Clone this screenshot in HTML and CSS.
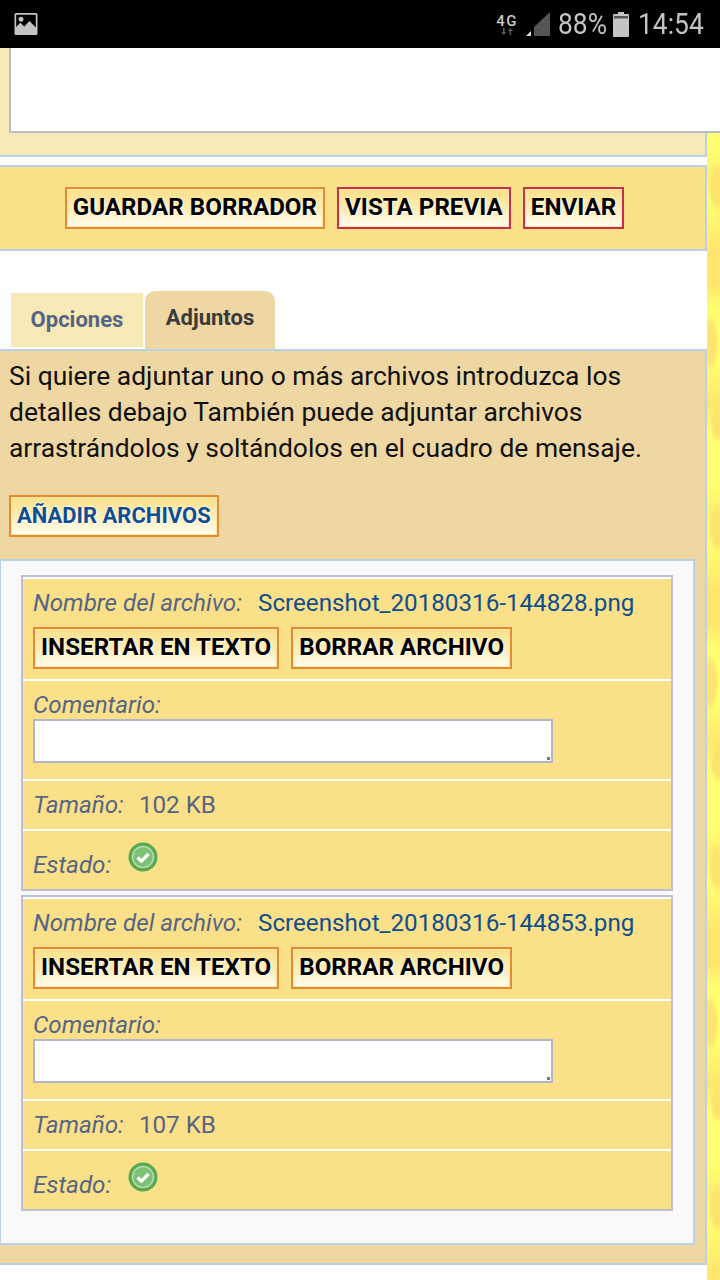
FILE: index.html
```html
<!DOCTYPE html>
<html lang="es">
<head>
<meta charset="utf-8">
<title>Adjuntos</title>
<link rel="stylesheet" href="styles.css">
</head>
<body>
<header class="status">
  <svg class="status-img" width="24" height="24" viewBox="0 0 24 24"><path fill="#c4c4c4" fill-rule="evenodd" d="M2 1h20a1.500 1.500 0 0 1 1.500 1.500v19a1.500 1.500 0 0 1-1.500 1.500H2a1.500 1.500 0 0 1-1.500-1.500v-19A1.500 1.500 0 0 1 2 1zM2.200 2.800v12.200l4-4.200 4.200 3.800 5-5.600 6.400 6.600V2.800zM7 4.700a2.500 2.500 0 1 1 0 5 2.500 2.500 0 0 1 0-5z"/></svg>
  <div class="status-right">
    <div class="net">
      <span class="net-label">4G</span>
      <svg width="14" height="7" viewBox="0 0 14 7"><path fill="#555" d="M3 0h1.600v4H6.500L3.800 7 1 4h2zM9.500 7h1.600V3H13L10.300 0 7.600 3h1.900z"/></svg>
    </div>
    <svg class="signal" width="26" height="26" viewBox="0 0 26 26"><path fill="#555" d="M25 1v24H9V16z"/><path fill="#ddd" d="M6 20v5H1z"/></svg>
    <span class="pct">88%</span>
    <svg class="batt" width="16" height="25" viewBox="0 0 16 25"><path fill="#c4c4c4" d="M5 0h6v2h4a1 1 0 0 1 1 1v21a1 1 0 0 1-1 1H1a1 1 0 0 1-1-1V3a1 1 0 0 1 1-1h4z"/><path fill="#555" d="M1 4h14v2.500H1z"/></svg>
    <span class="time">14:54</span>
  </div>
</header>

<div class="page">
  <main class="main">
    <section class="panel panel-editor">
      <div class="editor"></div>
    </section>

    <section class="panel panel-actions">
      <button class="btn btn-orange">GUARDAR BORRADOR</button>
      <button class="btn btn-red">VISTA PREVIA</button>
      <button class="btn btn-red">ENVIAR</button>
    </section>

    <nav class="tabs">
      <span class="tab">Opciones</span>
      <span class="tab tab-active">Adjuntos</span>
    </nav>

    <section class="panel panel-attach">
      <p class="intro">Si quiere adjuntar uno o más archivos introduzca los detalles debajo También puede adjuntar archivos arrastrándolos y soltándolos en el cuadro de mensaje.</p>
      <button class="btn btn-orange btn-add">AÑADIR ARCHIVOS</button>

      <div class="files">
        <div class="file">
          <div class="row row-name">
            <div class="name-line"><em class="lbl">Nombre del archivo:</em><a class="link">Screenshot_20180316-144828.png</a></div>
            <div class="btns">
              <button class="btn btn-orange">INSERTAR EN TEXTO</button>
              <button class="btn btn-orange">BORRAR ARCHIVO</button>
            </div>
          </div>
          <div class="row row-comment">
            <em class="lbl">Comentario:</em>
            <div class="input"><i class="grip"></i></div>
          </div>
          <div class="row row-size"><em class="lbl">Tamaño:</em><span class="val">102 KB</span></div>
          <div class="row row-state"><em class="lbl">Estado:</em>
            <svg class="ok" width="30" height="30" viewBox="0 0 30 30"><circle cx="15" cy="15" r="14.500" fill="#5aa84e"/><circle cx="15" cy="15" r="10.500" fill="#7fc078" stroke="#b4dcae" stroke-width="1.500"/><path d="M9.500 15.500l4 3.500 7-7" fill="none" stroke="#fff" stroke-width="3.200"/></svg>
          </div>
        </div>
        <div class="file">
          <div class="row row-name">
            <div class="name-line"><em class="lbl">Nombre del archivo:</em><a class="link">Screenshot_20180316-144853.png</a></div>
            <div class="btns">
              <button class="btn btn-orange">INSERTAR EN TEXTO</button>
              <button class="btn btn-orange">BORRAR ARCHIVO</button>
            </div>
          </div>
          <div class="row row-comment">
            <em class="lbl">Comentario:</em>
            <div class="input"><i class="grip"></i></div>
          </div>
          <div class="row row-size"><em class="lbl">Tamaño:</em><span class="val">107 KB</span></div>
          <div class="row row-state"><em class="lbl">Estado:</em>
            <svg class="ok" width="30" height="30" viewBox="0 0 30 30"><circle cx="15" cy="15" r="14.500" fill="#5aa84e"/><circle cx="15" cy="15" r="10.500" fill="#7fc078" stroke="#b4dcae" stroke-width="1.500"/><path d="M9.500 15.500l4 3.500 7-7" fill="none" stroke="#fff" stroke-width="3.200"/></svg>
          </div>
        </div>
      </div>
    </section>
  </main>
  <aside class="strip"></aside>
</div>
</body>
</html>
```
FILE: styles.css
```css
* { box-sizing: border-box; }
html, body { margin: 0; padding: 0; }
body { width: 720px; height: 1280px; overflow: hidden; background: #fff; font-family: Roboto, "Liberation Sans", sans-serif; color: #000; }

.status { height: 48px; background: #000; display: flex; align-items: center; justify-content: space-between; padding: 0 16px 0 14px; color: #c4c4c4; }
.status-img { display: block; }
.status-right { display: flex; align-items: center; }
.net { width: 22px; display: flex; flex-direction: column; align-items: center; margin-right: 7px; }
.net-label { font-size: 15px; line-height: 14px; font-weight: 500; letter-spacing: 1.500px; color: #ccc; }
.signal { margin-right: 7px; }
.pct, .time { font-size: 30px; font-weight: 400; line-height: 48px; display: inline-block; transform: scaleX(.88); }
.pct { width: 48px; transform-origin: left center; white-space: nowrap; margin-right: 7px; }
.batt { margin-right: 9px; }
.time { width: 66px; transform-origin: left center; white-space: nowrap; }

.page { display: flex; height: 1232px; align-items: stretch; }
.main { width: 707px; flex: none; position: relative; }
.strip {
  width: 13px; flex: none; margin-top: 85px;
  background:
    radial-gradient(ellipse 9px 26px at 10px 55px, #fde46f 60%, transparent 100%),
    radial-gradient(ellipse 9px 30px at 3px 210px, #fde46f 60%, transparent 100%),
    radial-gradient(ellipse 8px 20px at 11px 290px, #fde46f 60%, transparent 100%),
    linear-gradient(#ffff70 0 14px, #fdf06f 40px, #ffff70 70px, #ffe56e 120px, #ffe56e 150px, #ffff70 175px, #ffff70 230px, #fee76f 270px, #ffff70 300px),
    #ffff70;
  background-size: 13px 340px;
}

.panel { border: 2px solid #b9d2e6; border-left: 0; }
.panel-editor { height: 109px; background: #f7e9b5; border-top: 0; padding-left: 9px; }
.editor { height: 85px; width: 711px; background: #fff; border: 2px solid #b9bcc2; border-top: 0; border-right: 0; position: relative; z-index: 1; }

.panel-actions { margin-top: 8px; height: 86px; background: #fae088; display: flex; justify-content: center; align-items: center; gap: 12px; padding-right: 16px; }

.btn { height: 42px; padding: 0 6px 2px; font: 700 24.2px/36px Roboto, "Liberation Sans", sans-serif; color: #000; white-space: nowrap; background: linear-gradient(#fae088, #fdeeb8 55%, #fffdf2); border: 2px solid #e58b32; box-shadow: inset 0 0 0 1px #fbe9a8; text-shadow: 1px 1px 1px #fff; }
.btn-red { border-color: #c8304f; }

.tabs { margin-top: 40px; height: 58px; display: flex; align-items: flex-end; padding-left: 11px; gap: 2px; }
.tab { width: 132px; height: 54px; margin-bottom: 2px; background: #f7e9b5; color: #566583; font-size: 22px; font-weight: 700; text-align: center; line-height: 54px; }
.tab-active { width: 130px; height: 58px; margin: 0; background: #eed7a3; color: #3a3a3a; border-radius: 10px 10px 0 0; line-height: 54px; }

.panel-attach { height: 916px; background: #eed7a3; }
.intro { margin: 0; padding: 7px 9px 0; font-size: 26.4px; line-height: 36px; color: #111; height: 144px; }
.btn-add { display: block; margin-left: 9px; color: #104e8f; padding: 0 6px; font-size: 22px; text-shadow: 0 0 3px #fff, 1px 1px 1px #fff; }

.files { margin-top: 22px; width: 695px; height: 686px; background: #f9f9f9; border: 2px solid #b9d2e6; border-left-width: 1px; padding: 14px 0 0 20px; display: flex; flex-direction: column; gap: 4px; }
.file { width: 652px; height: 316px; border: 2px solid #bcc0d2; padding-top: 2px; background: #fff; display: flex; flex-direction: column; gap: 2px; }
.row { background: #fae088; padding-left: 10px; font-size: 24.2px; color: #566583; }
.lbl { font-style: italic; font-weight: 400; }
.row-name { height: 100px; }
.name-line { height: 48px; line-height: 48px; white-space: nowrap; }
.link { margin-left: 16px; color: #104e8f; }
.btns { display: flex; gap: 12px; }
.row-comment { height: 98px; padding-top: 9px; line-height: 30px; }
.row-comment .input { margin-top: -1px; }
.input { width: 520px; height: 44px; background: #fff; border: 2px solid #b1b6c9; position: relative; }
.grip { position: absolute; right: 1px; bottom: 1px; width: 3px; height: 3px; background: #777; }
.row-size { height: 48px; line-height: 48px; }
.val { margin-left: 15px; }
.row-state { height: 58px; flex: 1; display: flex; align-items: flex-start; }
.row-state .lbl { line-height: 68px; }
.ok { margin: 11px 0 0 17px; filter: blur(.5px); }
```
